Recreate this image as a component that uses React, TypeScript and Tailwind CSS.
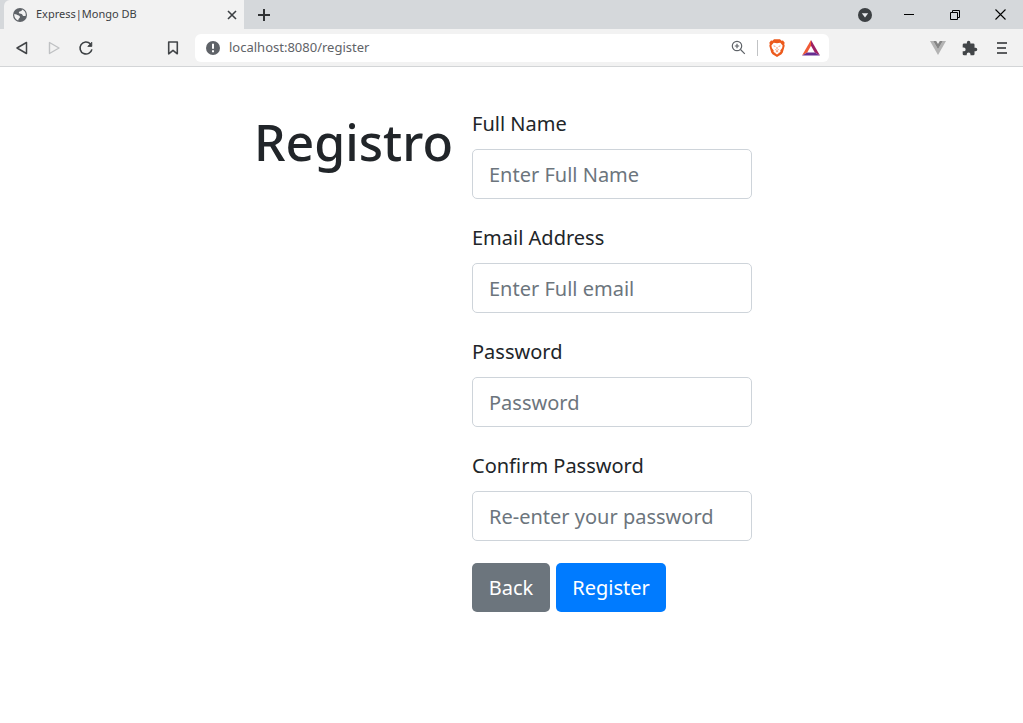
import type { ReactNode } from "react";

const fields = [
  { id: "name", label: "Full Name", placeholder: "Enter Full Name", type: "text" },
  { id: "email", label: "Email Address", placeholder: "Enter Full email", type: "email" },
  { id: "password", label: "Password", placeholder: "Password", type: "password" },
  { id: "confirm", label: "Confirm Password", placeholder: "Re-enter your password", type: "password" },
];

function IconButton({ label, className, children }: { label: string; className: string; children: ReactNode }) {
  return (
    <button type="button" aria-label={label} className={`flex shrink-0 items-center justify-center ${className}`}>
      {children}
    </button>
  );
}

function TabStrip() {
  return (
    <div className="flex h-[29px] items-stretch bg-[#d5d8db] pl-1">
      <div className="flex w-60 items-center rounded-tl-md bg-[#f2f2f2] pr-1 pl-2">
        <svg width="16" height="16" viewBox="0 0 16 16" className="shrink-0">
          <circle cx="8" cy="8" r="7" fill="#5f6368" />
          <path
            d="M10 2.400C9.900 3.800 9 4.200 7.600 4.500 6.500 4.800 6.600 6.400 7.800 6.600L9.600 6.900C10.400 7.100 10.500 8.600 11.300 8.900L13.600 9C14.400 6 12.700 3.300 10 2.400Z"
            fill="#f2f2f2"
          />
          <path
            d="M2.300 7.100 4.600 7.600C5.500 8.500 6.600 8.400 7.500 9.100 8.400 10 7.900 11 7 11.400 6.300 11.800 6.500 12.700 6.200 13.500 3.700 12.700 1.900 9.900 2.300 7.100Z"
            fill="#f2f2f2"
          />
        </svg>
        <span className="ml-2 flex-1 text-[11px] text-[#3c4043]">Express|Mongo DB</span>
        <IconButton label="Close tab" className="size-4">
          <svg width="10" height="10" viewBox="0 0 10 10" fill="none" stroke="#3c4043" strokeWidth="1.6">
            <path d="m1 1 8 8M9 1 1 9" />
          </svg>
        </IconButton>
      </div>
      <IconButton label="New tab" className="w-10">
        <svg width="12" height="12" viewBox="0 0 12 12" stroke="#303234" strokeWidth="2">
          <path d="M6 0v12M0 6h12" />
        </svg>
      </IconButton>
      <div className="ml-auto flex">
        <IconButton label="Search tabs" className="w-[42px]">
          <svg width="14" height="14" viewBox="0 0 14 14">
            <circle cx="7" cy="7" r="7" fill="#3c4043" />
            <path d="M3.800 5.200h6.400L7 9.500Z" fill="#e8eaed" />
          </svg>
        </IconButton>
        <IconButton label="Minimize" className="w-[46px]">
          <svg width="10" height="10" viewBox="0 0 10 10">
            <path d="M0 4.500h10" stroke="#000" />
          </svg>
        </IconButton>
        <IconButton label="Restore" className="w-[46px]">
          <svg width="10" height="10" viewBox="0 0 10 10" fill="none" stroke="#000">
            <path d="M.5 2.500h7v7h-7ZM2.500 2.500v-2h7v7h-2" />
          </svg>
        </IconButton>
        <IconButton label="Close window" className="w-[45px]">
          <svg width="11" height="11" viewBox="0 0 11 11" stroke="#000" strokeWidth="1.100">
            <path d="m.5.5 10 10M10.500.5l-10 10" />
          </svg>
        </IconButton>
      </div>
    </div>
  );
}

function Toolbar() {
  return (
    <div className="flex h-[38px] items-center border-b border-[#d3d5d7] bg-[#f2f2f2] pl-[6px]">
      <IconButton label="Go back" className="size-8">
        <svg width="14" height="14" viewBox="0 0 14 14" fill="none" stroke="#424548" strokeWidth="1.500" strokeLinejoin="round">
          <path d="M11.500 1.500v11L2 7Z" />
        </svg>
      </IconButton>
      <IconButton label="Go forward" className="size-8">
        <svg width="14" height="14" viewBox="0 0 14 14" fill="none" stroke="#bfc1c3" strokeWidth="1.400" strokeLinejoin="round">
          <path d="M2.500 1.500v11L12 7Z" />
        </svg>
      </IconButton>
      <IconButton label="Reload" className="size-8">
        <svg width="16" height="16" viewBox="0 0 16 16" fill="none" stroke="#3c4043" strokeWidth="1.600">
          <path d="M12.300 3.800A6 6 0 1 0 13.900 9.300" />
          <path d="M13.800 2.200v4.200H9.800Z" fill="#3c4043" strokeWidth=".8" strokeLinejoin="round" />
        </svg>
      </IconButton>
      <IconButton label="Bookmark" className="ml-[55px] size-8">
        <svg width="12" height="14" viewBox="0 0 12 14" fill="none" stroke="#424548" strokeWidth="1.600" strokeLinejoin="round">
          <path d="M1.700 1h8.600v11.800L6 9.400l-4.300 3.400Z" />
        </svg>
      </IconButton>
      <div className="ml-[6px] flex h-7 max-w-[634px] flex-1 items-center rounded-md bg-white pr-2 pl-[11px]">
        <svg width="14" height="14" viewBox="0 0 14 14" className="shrink-0">
          <circle cx="7" cy="7" r="7" fill="#5f6368" />
          <path d="M7 2.800v5M7 9.200v2" stroke="#fff" strokeWidth="2" />
        </svg>
        <input
          aria-label="Address"
          defaultValue="localhost:8080/register"
          className="ml-[9px] min-w-0 flex-1 text-[13px] text-[#5f6368] outline-none"
        />
        <IconButton label="Zoom" className="size-5">
          <svg width="15" height="15" viewBox="0 0 15 15" fill="none" stroke="#5f6368" strokeWidth="1.200">
            <circle cx="6" cy="6" r="4.700" />
            <path d="m9.500 9.500 4.300 4.300M6 3.800v4.400M3.800 6h4.400" />
          </svg>
        </IconButton>
        <span className="mx-[9px] h-4 w-px bg-[#c1c3c5]" />
        <IconButton label="Brave Shields" className="size-5">
          <svg width="16" height="18" viewBox="0 0 16 18">
            <path d="M5 .3h6l1.500 1.500 1.500-.2 1.700 2.200-.5 1.500.5 1.500-1.900 6.600-1.300 1.800L8 17.900l-4.500-2.700-1.300-1.800L.3 6.800l.5-1.500-.5-1.500L2 1.600l1.500.2Z" fill="#ec5a1c" />
            <path d="m4.700 3.700 3.300.6 3.300-.6 2.300 2.700-.5 2.500-1.800 2.600.2 1.300L8 15.500l-3.500-2.700.2-1.300-1.800-2.600-.5-2.500Z" fill="#fff" />
            <path
              d="m4.600 6.900 1.800.5M11.400 6.900l-1.800.5M8 8v2M6.300 10.500l1.700 1 1.700-1M6.800 13l1.200-.6 1.200.6"
              fill="none"
              stroke="#ec5a1c"
              strokeWidth=".9"
              opacity=".7"
            />
          </svg>
        </IconButton>
        <IconButton label="Brave Rewards" className="ml-[14px] size-5">
          <svg width="18" height="16" viewBox="0 0 18 16">
            <path d="M9 0 0 15.500 5.200 12.500 9 5.800Z" fill="#f15a35" />
            <path d="m9 0 9 15.500-5.200-3L9 5.800Z" fill="#9e1f63" />
            <path d="M0 15.500h18l-5.200-3H5.200Z" fill="#662d91" />
          </svg>
        </IconButton>
      </div>
      <div className="ml-auto flex pr-[5px]">
        <IconButton label="Vue.js devtools" className="size-8">
          <svg width="16" height="14" viewBox="0 0 16 14">
            <path d="M0 0h3.200L8 8.300 12.800 0H16L8 14Z" fill="#b3b3b3" />
            <path d="M3.200 0h3L8 3.100 9.800 0h3L8 8.300Z" fill="#858585" />
          </svg>
        </IconButton>
        <IconButton label="Extensions" className="size-8">
          <svg width="16" height="16" viewBox="1 0 23 23" fill="#424548">
            <path d="M20.500 11H19V7a2 2 0 0 0-2-2h-4V3.500a2.500 2.500 0 0 0-5 0V5H4a2 2 0 0 0-2 2v3.800h1.500a2.700 2.700 0 0 1 0 5.400H2V20a2 2 0 0 0 2 2h3.800v-1.500a2.700 2.700 0 0 1 5.400 0V22H17a2 2 0 0 0 2-2v-4h1.500a2.500 2.500 0 0 0 0-5Z" />
          </svg>
        </IconButton>
        <IconButton label="Menu" className="size-8">
          <svg width="10" height="12" viewBox="0 0 10 12" stroke="#5b5d5f" strokeWidth="2">
            <path d="M0 1h10M0 6h9M0 11h10" />
          </svg>
        </IconButton>
      </div>
    </div>
  );
}

export default function App() {
  return (
    <div className="min-h-screen bg-white font-['Noto_Sans',sans-serif] text-[#212529]">
      <header>
        <TabStrip />
        <Toolbar />
      </header>
      <main className="flex justify-center pt-10 pr-[17px]">
        <h1 className="w-[218px] text-[50px] leading-[70px] font-medium">Registro</h1>
        <form className="w-[280px] text-xl" onSubmit={(event) => event.preventDefault()}>
          {fields.map((field) => (
            <div key={field.id} className="mb-[22px]">
              <label htmlFor={field.id} className="mb-2 block leading-[34px]">
                {field.label}
              </label>
              <input
                id={field.id}
                type={field.type}
                placeholder={field.placeholder}
                className="block h-[50px] w-full rounded-[5px] border border-[#ced4da] px-4 placeholder:text-[#6c757d]"
              />
            </div>
          ))}
          <div className="flex gap-[6px] text-white">
            <button type="button" className="h-[49px] w-[78px] rounded-[5px] bg-[#6c757d]">
              Back
            </button>
            <button type="submit" className="h-[49px] w-[110px] rounded-[5px] bg-[#007bff]">
              Register
            </button>
          </div>
        </form>
      </main>
    </div>
  );
}
